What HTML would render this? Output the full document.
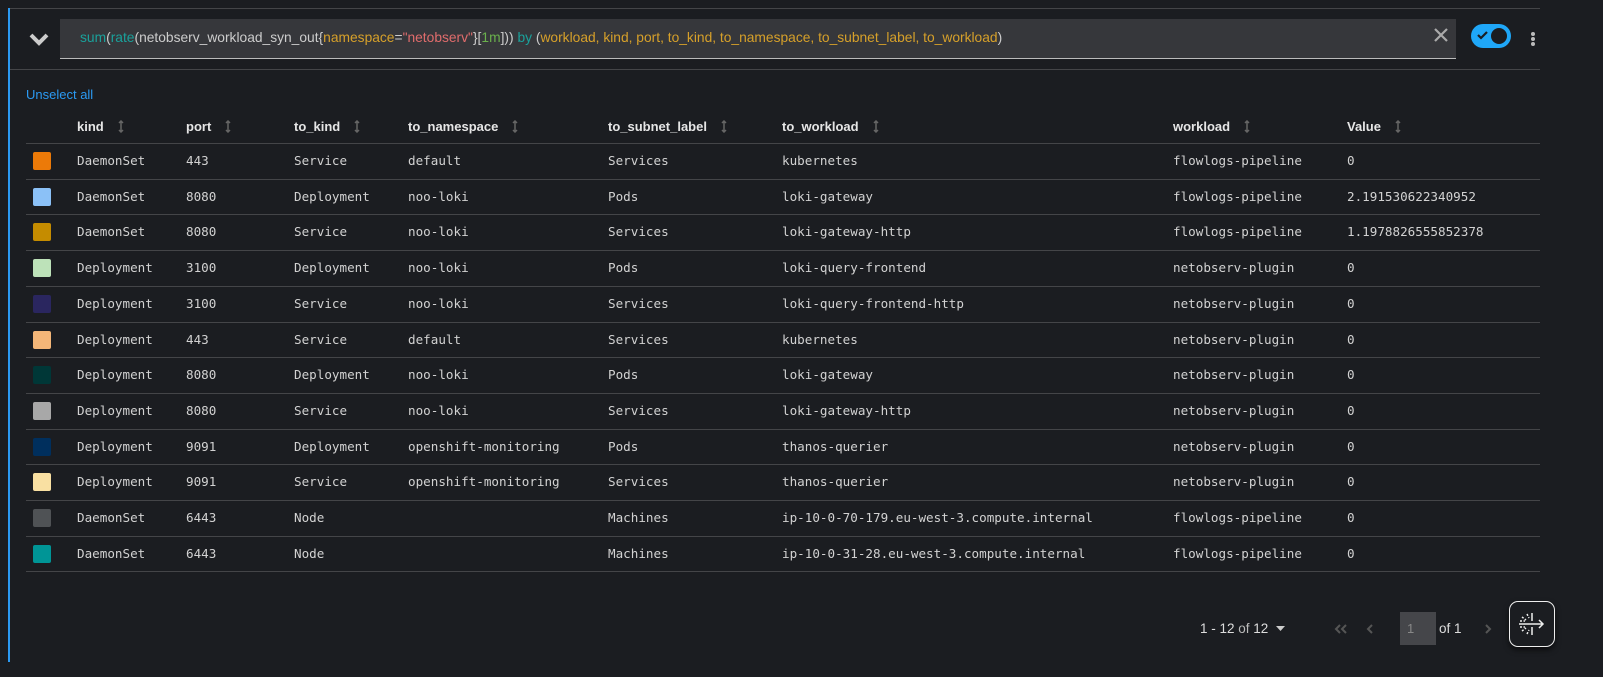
<!DOCTYPE html>
<html><head><style>
body{margin:0;background:#1b1d21;width:1603px;height:677px;overflow:hidden;font-family:"Liberation Sans",sans-serif;position:relative}
.a{position:absolute}
.mono{font-family:"DejaVu Sans Mono","Liberation Mono",monospace;font-size:12.6px;color:#d2d2d2}
.h{font-size:13px;color:#e6e6e6;font-weight:bold}
.sort{display:inline-block;margin-left:14px;vertical-align:-2px}
.line{position:absolute;height:1px;background:#444548}
.sw{position:absolute;left:33px;width:18px;height:18px;border-radius:2px}
</style></head><body>
<div class="line" style="left:10px;top:8px;width:1530px"></div>
<div class="a" style="left:8px;top:8px;width:2px;height:654px;background:#2b9af3"></div>
<svg class="a" style="left:28px;top:31px" width="22" height="16" viewBox="0 0 22 16"><path d="M3 4 L11 12 L19 4" stroke="#ccc" stroke-width="4" fill="none"/></svg>
<div class="a" style="left:60px;top:19px;width:1396px;height:39px;background:#36373b;border-bottom:1px solid #bbb"></div>
<div class="a" style="left:80px;top:30px;font-size:13.8px;color:#ccc;white-space:pre"><span style="color:#1aa19b">sum</span>(<span style="color:#1aa19b">rate</span>(netobserv_workload_syn_out{<span style="color:#d6a02a">namespace</span>=<span style="color:#e06c6c">"netobserv"</span>}[<span style="color:#6ab04c">1m</span>])) <span style="color:#1aa19b">by</span> (<span style="color:#d6a02a">workload, kind, port, to_kind, to_namespace, to_subnet_label, to_workload</span>)</div>
<svg class="a" style="left:1434px;top:28px" width="14" height="14"><path d="M1 1L13 13M13 1L1 13" stroke="#aaa" stroke-width="2.2"/></svg>
<div class="a" style="left:1471px;top:24px;width:40px;height:24px;border-radius:12px;background:#1fa7f8"></div>
<div class="a" style="left:1491px;top:28px;width:16px;height:16px;border-radius:50%;background:#1b1d21"></div>
<svg class="a" style="left:1477px;top:30px" width="12" height="10"><path d="M1 5L4 8L10 2" stroke="#1b1d21" stroke-width="2.2" fill="none"/></svg>
<div class="a" style="left:1531px;top:32px;width:4px;height:4px;border-radius:2px;background:#bbb;box-shadow:0 5px 0 #bbb,0 10px 0 #bbb"></div>
<div class="line" style="left:10px;top:69px;width:1530px"></div>
<div class="a" style="left:26px;top:87px;font-size:13px;color:#2b9af3">Unselect all</div>
<div id="hd"></div>
<div class="line" style="left:26px;top:143px;width:1514px"></div>
<div id="rows"></div>
<script>
var names=["kind","port","to_kind","to_namespace","to_subnet_label","to_workload","workload","Value"];
var xs=[77,186,294,408,608,782,1173,1347],hh="";
var ic='<svg class="sort" width="6" height="13"><path d="M3 1V12M1 3L3 1L5 3M1 10L3 12L5 10" stroke="#666" stroke-width="1.5" fill="none"/></svg>';
names.forEach(function(n,i){hh+='<div class="a h" style="top:119px;left:'+xs[i]+'px">'+n+ic+'</div>';});
document.getElementById("hd").innerHTML=hh;
var d=[["#ec7a08","DaemonSet","443","Service","default","Services","kubernetes","flowlogs-pipeline","0"],
["#8bc1f7","DaemonSet","8080","Deployment","noo-loki","Pods","loki-gateway","flowlogs-pipeline","2.191530622340952"],
["#c58c00","DaemonSet","8080","Service","noo-loki","Services","loki-gateway-http","flowlogs-pipeline","1.1978826555852378"],
["#bde2b9","Deployment","3100","Deployment","noo-loki","Pods","loki-query-frontend","netobserv-plugin","0"],
["#2a265f","Deployment","3100","Service","noo-loki","Services","loki-query-frontend-http","netobserv-plugin","0"],
["#f4b678","Deployment","443","Service","default","Services","kubernetes","netobserv-plugin","0"],
["#003737","Deployment","8080","Deployment","noo-loki","Pods","loki-gateway","netobserv-plugin","0"],
["#a8a8a8","Deployment","8080","Service","noo-loki","Services","loki-gateway-http","netobserv-plugin","0"],
["#002f5d","Deployment","9091","Deployment","openshift-monitoring","Pods","thanos-querier","netobserv-plugin","0"],
["#f9e0a2","Deployment","9091","Service","openshift-monitoring","Services","thanos-querier","netobserv-plugin","0"],
["#4f5255","DaemonSet","6443","Node","","Machines","ip-10-0-70-179.eu-west-3.compute.internal","flowlogs-pipeline","0"],
["#009596","DaemonSet","6443","Node","","Machines","ip-10-0-31-28.eu-west-3.compute.internal","flowlogs-pipeline","0"]];
var h="";
d.forEach(function(r,i){var y=143+i*35.7;
h+='<div class="sw" style="top:'+(y+9)+'px;background:'+r[0]+'"></div>';
for(var j=1;j<9;j++)h+='<div class="a mono" style="left:'+xs[j-1]+'px;top:'+(y+10)+'px">'+r[j]+'</div>';
h+='<div class="line" style="left:26px;top:'+(y+35.7)+'px;width:1514px"></div>';});
document.getElementById("rows").innerHTML=h;
</script>
<div class="a" style="left:1200px;top:621px;font-size:13.5px;color:#ddd">1 - 12 <span style="color:#bbb">of</span> 12</div>
<svg class="a" style="left:1276px;top:626px" width="9" height="5"><path d="M0 0H9L4.5 5Z" fill="#ccc"/></svg>
<svg class="a" style="left:1334px;top:623px" width="14" height="12"><path d="M6 2L2 6L6 10M12 2L8 6L12 10" stroke="#555" stroke-width="2" fill="none"/></svg>
<svg class="a" style="left:1366px;top:623px" width="8" height="12"><path d="M6 2L2 6L6 10" stroke="#555" stroke-width="2" fill="none"/></svg>
<div class="a" style="left:1400px;top:612px;width:36px;height:33px;background:#45464a;color:#888;font-size:13px;line-height:33px;text-indent:7px">1</div>
<div class="a" style="left:1439px;top:621px;font-size:13.5px;color:#ddd">of 1</div>
<svg class="a" style="left:1484px;top:623px" width="8" height="12"><path d="M2 2L6 6L2 10" stroke="#555" stroke-width="2" fill="none"/></svg>
<div class="a" style="left:1509px;top:601px;width:44px;height:44px;border:1.5px solid #eee;border-radius:9px;background:#1b1d21;box-shadow:0 3px 6px rgba(0,0,0,.6)"></div>
<svg class="a" style="left:1516px;top:609px" width="32" height="30"><g stroke="#eee" stroke-width="1.5" fill="none"><path d="M16 4V12M16 18V26M3 15H27M23 11L27 15L23 19"/><path d="M6 8L10 11M6 22L10 19M4 12H9M4 18H9M11 5L13 9M11 25L13 21" stroke-dasharray="2 1.5"/></g></svg>
</body></html>
